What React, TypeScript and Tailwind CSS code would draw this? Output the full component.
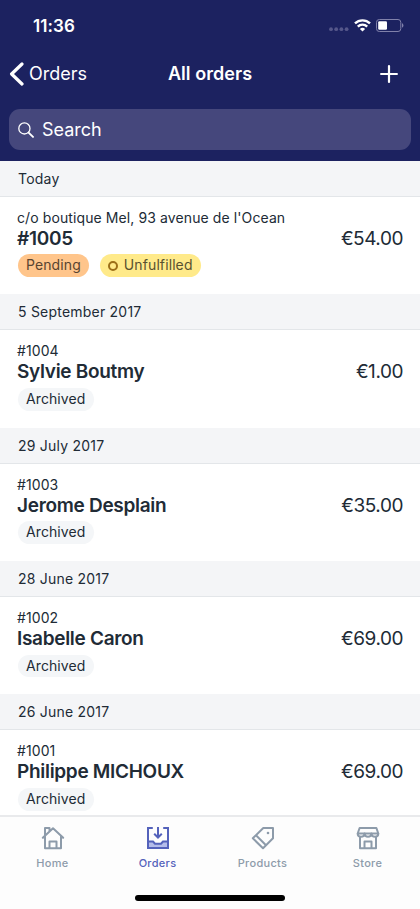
import clsx from 'clsx'

interface IOrder {
  date: string
  label: string
  title: string
  price: string
  status: 'open' | 'archived'
}

const orders: IOrder[] = [
  { date: 'Today', label: "c/o boutique Mel, 93 avenue de l'Ocean", title: '#1005', price: '€54.00', status: 'open' },
  { date: '5 September 2017', label: '#1004', title: 'Sylvie Boutmy', price: '€1.00', status: 'archived' },
  { date: '29 July 2017', label: '#1003', title: 'Jerome Desplain', price: '€35.00', status: 'archived' },
  { date: '28 June 2017', label: '#1002', title: 'Isabelle Caron', price: '€69.00', status: 'archived' },
  { date: '26 June 2017', label: '#1001', title: 'Philippe MICHOUX', price: '€69.00', status: 'archived' },
]

function StatusBar() {
  return (
    <div className="flex h-[50px] items-center justify-between pl-[33px] pr-4 pt-px">
      <span className="text-[17px] leading-5 font-semibold tracking-[0.1px]">11:36</span>
      <div className="flex items-center">
        <svg width="20" height="5" viewBox="0 0 20 5" className="mt-[8px] mr-[5px]" fill="#55578a">
          <circle cx="2" cy="2.2" r="1.9" />
          <circle cx="7.2" cy="2.2" r="1.9" />
          <circle cx="12.4" cy="2.2" r="1.9" />
          <circle cx="17.6" cy="2.2" r="1.9" />
        </svg>
        <svg width="17" height="13" viewBox="0 0 17 13" className="mr-[5px]" fill="none" stroke="#fff" strokeWidth="2.4">
          <path d="M1 4.4a10.7 10.7 0 0 1 15 0" />
          <path d="M3.8 7.6a6.7 6.7 0 0 1 9.4 0" />
          <path d="M8.5 12.6 5.9 10a3.7 3.7 0 0 1 5.2 0z" fill="#fff" stroke="none" />
        </svg>
        <svg width="28" height="13" viewBox="0 0 28 13" fill="none">
          <rect x="0.5" y="0.5" width="24.3" height="12" rx="2.8" stroke="#8081aa" />
          <rect x="2.2" y="2.2" width="8.8" height="8.6" rx="1.2" fill="#fff" />
          <path d="M26 4.3c1.9.7 1.9 3.7 0 4.4z" fill="#8081aa" />
        </svg>
      </div>
    </div>
  )
}

function Header() {
  return (
    <header className="h-[160.7px] shrink-0 bg-[#1c2260] text-white">
      <StatusBar />
      <div className="grid h-12 grid-cols-3 items-center">
        <button className="flex items-center gap-[5px] pl-[9px] text-left">
          <svg width="15" height="24" viewBox="0 0 15 24" fill="none" stroke="#fff" strokeWidth="3.2" strokeLinecap="round" strokeLinejoin="round">
            <path d="M13 2 2.6 12 13 22" />
          </svg>
          <span className="text-[18px] leading-6">Orders</span>
        </button>
        <h1 className="text-center text-[18px] leading-6 font-semibold tracking-[0.05px]">All orders</h1>
        <button className="flex justify-end pr-[22.5px]">
          <svg width="18" height="18" viewBox="0 0 18 18" stroke="#fff" strokeWidth="2.2" strokeLinecap="round">
            <path d="M9 1.1v15.8M1.1 9h15.8" />
          </svg>
        </button>
      </div>
      <div className="mx-[9px] mt-[11.4px] flex h-[40.3px] items-center gap-[8px] rounded-[11px] bg-[#45477c] pl-[9px]">
        <svg width="16" height="16" viewBox="0 0 16 16" fill="none" stroke="#fff" strokeLinecap="round">
          <circle cx="6.4" cy="6.4" r="5.6" strokeWidth="1.3" />
          <path d="m10.6 10.6 4.4 4.3" strokeWidth="1.9" />
        </svg>
        <span className="text-[18px] leading-6">Search</span>
      </div>
    </header>
  )
}

function Order({ order }: { order: IOrder }) {
  return (
    <section className="h-[133.45px]">
      <h2 className="h-9 border-b border-[#e3e6e9] bg-[#f4f5f7] pl-[18px] text-[14px] leading-[35px] tracking-[0.22px]">{order.date}</h2>
      <div className="pl-[17px] pr-[17px] pt-[12px]">
        <p className="text-[14px] leading-[18px] tracking-[0.1px]">{order.label}</p>
        <div className="flex items-center justify-between leading-[24px]">
          <p className="text-[19px] font-semibold tracking-[-0.3px]">{order.title}</p>
          <p className="text-[19px] tracking-[-0.45px]">{order.price}</p>
        </div>
        <div className="mt-[3.8px] ml-px flex gap-[11px] text-[14px] leading-[22.6px] tracking-[0.1px]">
          {order.status === 'open' ? (
            <>
              <span className="rounded-full bg-[#ffc58b] px-2 text-[#594430]">Pending</span>
              <span className="flex items-center gap-[6px] rounded-full bg-[#ffea8a] px-2 text-[#595130]">
                <span className="h-[10px] w-[10px] rounded-full border-2 border-[#9c6f19]" />
                Unfulfilled
              </span>
            </>
          ) : (
            <span className="rounded-full bg-[#f4f6f8] px-2">Archived</span>
          )}
        </div>
      </div>
    </section>
  )
}

function HomeIcon() {
  return (
    <svg width="24" height="24" viewBox="0 0 24 24" fill="none" stroke="currentColor" strokeWidth="2" strokeLinejoin="round" strokeLinecap="round">
      <path d="M1.8 11.8 12 2.2l10.2 9.6M4 10.5v11.7h16V10.5M4 9.5V2h4.5v3M8.5 22v-6.5h7V22" />
    </svg>
  )
}

function OrdersIcon() {
  return (
    <svg width="24" height="24" viewBox="0 0 24 24" fill="none" stroke="currentColor" strokeWidth="2">
      <path d="M2 15h5l2.4 2.7h5.2L17 15h5v7H2z" fill="#b4bcea" stroke="none" />
      <path d="M6.8 2H2v20h20V2h-4.8M2 15.5h5l2 2.2h6l2-2.2h5" />
      <path d="M12 1v10M8.2 7.8l3.8 3.7 3.8-3.7" />
    </svg>
  )
}

function ProductsIcon() {
  return (
    <svg width="24" height="24" viewBox="0 0 24 24" fill="none" stroke="currentColor" strokeWidth="2" strokeLinejoin="round">
      <path d="M12.3 2H22v10.2L12 22.3 1.8 12.3zM5 9.3 15 19.2" />
      <circle cx="17" cy="7" r="1.3" fill="currentColor" stroke="none" />
    </svg>
  )
}

function StoreIcon() {
  return (
    <svg width="24" height="24" viewBox="0 0 24 24" fill="none" stroke="currentColor" strokeWidth="2" strokeLinejoin="round">
      <path d="M3.6 2h16.8l1.9 5.5H1.7z" />
      <path d="M1.7 7.5c0 4.4 6.6 4.4 6.9 0 .3 4.4 6.5 4.4 6.8 0 .3 4.4 6.9 4.4 6.9 0" />
      <path d="M4 11v11.2h16V11M8.5 22v-6.5h7V22" />
    </svg>
  )
}

const tabs = [
  { name: 'Home', icon: <HomeIcon /> },
  { name: 'Orders', icon: <OrdersIcon /> },
  { name: 'Products', icon: <ProductsIcon /> },
  { name: 'Store', icon: <StoreIcon /> },
]

function TabBar() {
  return (
    <nav className="flex h-[94px] shrink-0 flex-col border-t-2 border-[#e9eaec] bg-[#fdfdfd]">
      <div className="grid grid-cols-4 pt-[9px]">
        {tabs.map((tab) => (
          <button key={tab.name} className={clsx('flex flex-col items-center gap-[6px]', tab.name === 'Orders' ? 'text-[#5462bb]' : 'text-[#8d9baa]')}>
            {tab.icon}
            <span className="text-[11px] leading-[14px] font-medium tracking-[0.3px]">{tab.name}</span>
          </button>
        ))}
      </div>
      <div className="mx-auto mt-[24.5px] h-[6px] w-[150px] rounded-full bg-black" />
    </nav>
  )
}

export default function App() {
  return (
    <div className="flex h-[909px] w-[420px] flex-col overflow-hidden bg-white font-['Inter',sans-serif] text-[#212b36]">
      <Header />
      <main className="min-h-0 flex-1 overflow-hidden">
        {orders.map((order) => (
          <Order key={order.date} order={order} />
        ))}
      </main>
      <TabBar />
    </div>
  )
}
